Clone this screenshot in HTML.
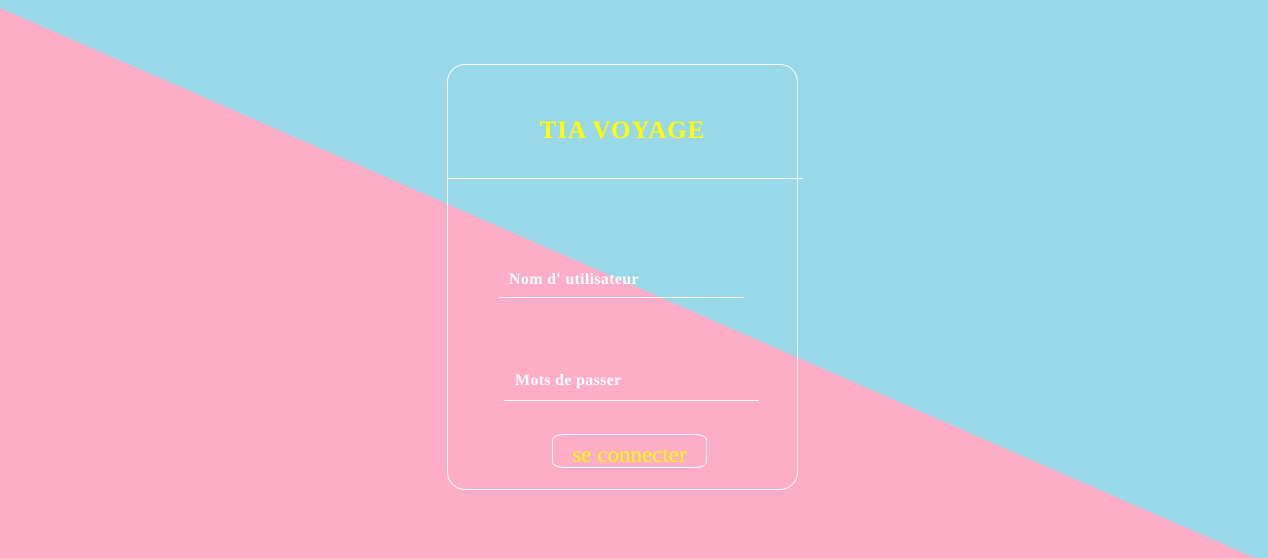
<!DOCTYPE html>
<html><head><style>
body{margin:0;width:1268px;height:558px;overflow:hidden;position:relative;font-family:"Liberation Serif",serif}
svg.bg{position:absolute;left:0;top:0}
.card{position:absolute;left:447px;top:64px;width:349px;height:424px;border:1px solid #fff;border-radius:18px}
.hr{position:absolute;left:448px;top:178px;width:355px;height:1px;background:#fff}
.title{position:absolute;left:447px;width:351px;top:117px;text-align:center;color:#ffff00;font-size:25px;font-weight:bold;letter-spacing:1px}
.lbl{position:absolute;color:#fff;font-size:16px;font-weight:bold;letter-spacing:0.3px}
.ln{position:absolute;height:1px;background:#fff}
.btn{position:absolute;left:552px;top:434px;width:153px;height:32px;border:1px solid #fff;border-radius:12px/6px;color:#ffff00;font-size:23px;text-align:center;line-height:40px}
</style></head><body>
<svg class="bg" width="1268" height="558"><rect width="1268" height="558" fill="#99d8e9"/><polygon points="0,8 1255,558 0,558" fill="#feadc6"/></svg>
<div class="card"></div>
<div class="hr"></div>
<div class="title">TIA VOYAGE</div>
<div class="lbl" style="left:509px;top:271px">Nom d' utilisateur</div>
<div class="ln" style="left:499px;top:297px;width:245px"></div>
<div class="lbl" style="left:515px;top:372px">Mots de passer</div>
<div class="ln" style="left:504px;top:400px;width:255px"></div>
<div class="btn">se connecter</div>
</body></html>
